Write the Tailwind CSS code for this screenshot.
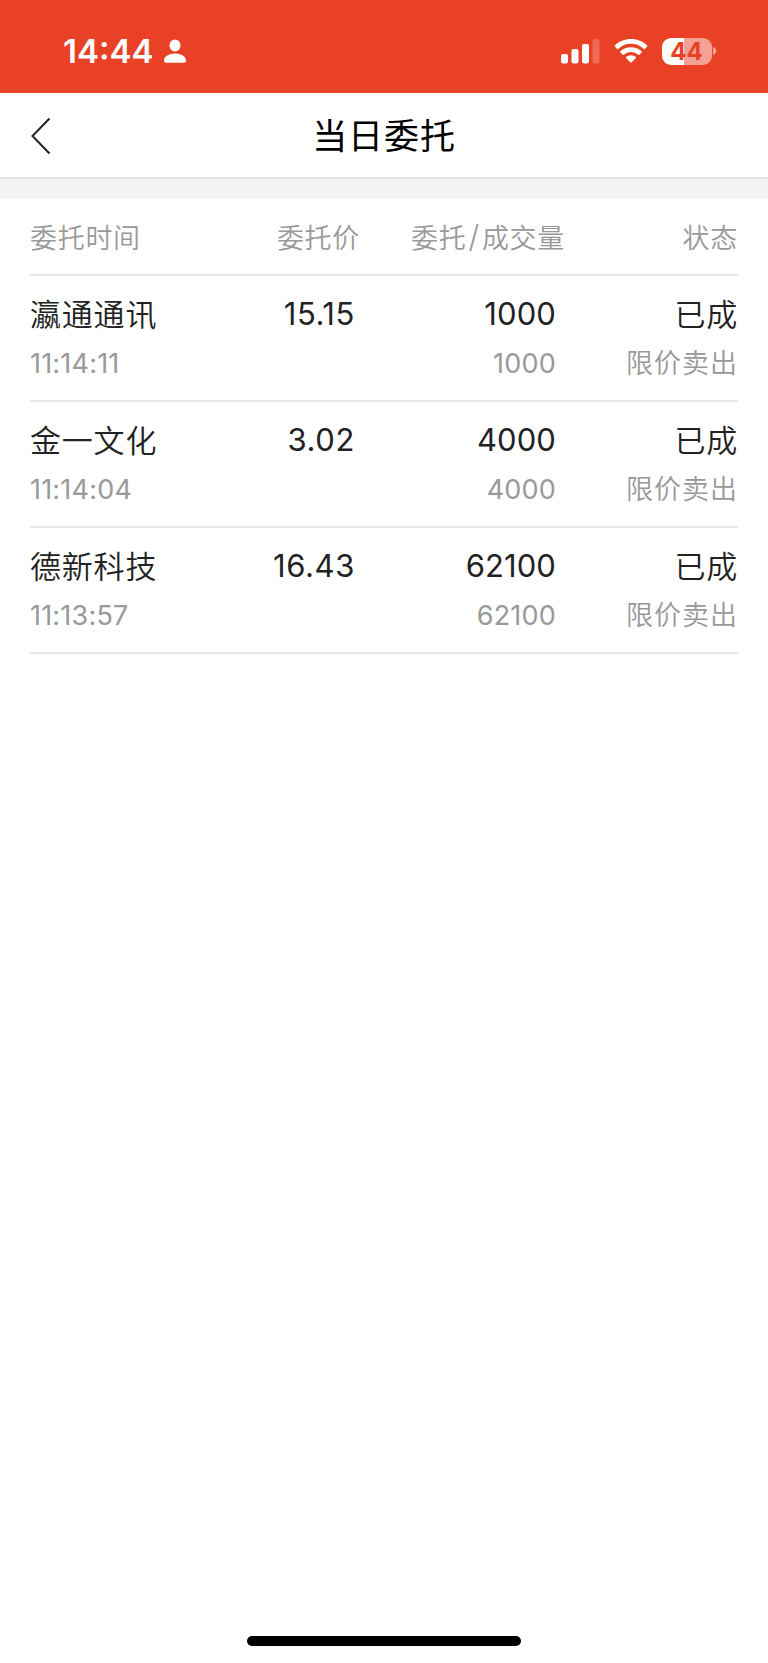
<!DOCTYPE html>
<html lang="zh-CN">
<head>
  <meta charset="UTF-8">
  <meta name="viewport" content="width=device-width, initial-scale=1.0">
  <title>当日委托</title>
  <script src="https://cdn.jsdelivr.net/npm/@tailwindcss/browser@4"></script>
</head>
<body class="bg-white font-['Inter','Noto_Sans_CJK_SC',sans-serif] text-[#222222]">

  <div class="flex flex-col h-[1663px] overflow-hidden">
    <!-- Status bar -->
    <div class="flex items-center h-[93px] bg-[#e94125] text-white pt-[9px] pl-[63px] pr-[51px]">
      <span class="text-[33px] leading-10 font-semibold">14:44</span>
      <svg class="ml-[10px]" width="24" height="26" viewBox="0 0 24 26" fill="currentColor">
        <ellipse cx="12" cy="7.500" rx="5.500" ry="6" />
        <path d="M1 22.500C1 18.500 6 15.500 12 15.500s11 3 11 7c0 1.500-.8 2.200-2.200 2.200H3.200C1.800 24.700 1 24 1 22.500z" />
      </svg>
      <svg class="ml-auto" width="40" height="26" viewBox="0 0 40 26" fill="currentColor">
        <rect x="1" y="16" width="7" height="9.500" rx="2" />
        <rect x="11.500" y="11" width="7" height="14.500" rx="2" />
        <rect x="22" y="6" width="7" height="19.500" rx="2" />
        <rect x="32.500" y="1" width="7" height="24.500" rx="2" opacity=".22" />
      </svg>
      <svg class="ml-[14px]" width="34" height="26" viewBox="0 0 34 26" fill="currentColor">
        <path d="M17 1C10.700 1 5 3.400.8 7.400c-.3.300-.3.800 0 1.100l2.400 2.400c.3.300.7.300 1 0C7.600 7.700 12 5.800 17 5.800s9.400 1.900 12.800 5.100c.3.300.7.300 1 0l2.400-2.400c.3-.3.300-.8 0-1.100C29 3.400 23.300 1 17 1z" />
        <path d="M17 9.200c-4.100 0-7.800 1.500-10.600 4.100-.3.300-.3.800 0 1.100l2.400 2.400c.3.300.7.300 1 0 1.900-1.700 4.400-2.800 7.200-2.800s5.300 1.100 7.200 2.800c.3.300.7.300 1 0l2.400-2.400c.3-.3.300-.8 0-1.100C24.800 10.700 21.100 9.200 17 9.200z" />
        <path d="M17 17.300c-1.900 0-3.600.7-4.900 1.800-.3.300-.3.700 0 1l4.400 4.400c.3.300.7.300 1 0l4.400-4.400c.3-.3.300-.7 0-1-1.300-1.100-3-1.800-4.900-1.800z" />
      </svg>
      <div class="flex items-center ml-[14px]">
        <div class="flex items-center justify-center w-[50px] h-[27px] rounded-[9px] bg-linear-to-r from-white from-44% to-[#f5a195] to-44% pt-px pr-px text-[#e94125] text-[24px] leading-none font-bold">44</div>
        <svg class="ml-[1px]" width="4" height="10" viewBox="0 0 4 10" fill="#f5a195">
          <path d="M0 1c2 .6 3.300 2 3.300 4S2 8.400 0 9z" />
        </svg>
      </div>
    </div>

    <!-- Navigation -->
    <div class="grid grid-cols-[1fr_auto_1fr] items-center h-[86px] px-[30px] border-b-2 border-[#e2e2e2]">
      <svg class="mt-[2px]" width="22" height="38" viewBox="0 0 22 38" fill="none" stroke="#222" stroke-width="2">
        <path d="M19.500 1.500 2.500 19l17 17.500" />
      </svg>
      <h1 class="pt-[2px] text-[35px] leading-[52px] tracking-[0.900px] text-black">当日委托</h1>
    </div>
    <div class="h-5 bg-[#f4f4f4]"></div>

    <!-- Orders -->
    <div class="mx-[30px]">
      <div class="grid grid-cols-[180px_150px_205px_1fr] items-center h-[77px] pt-[5px] border-b-2 border-[#e7e6ec] text-[27px] tracking-[0.700px] font-[350] text-[#999999]">
        <div>委托时间</div>
        <div class="text-right">委托价</div>
        <div class="text-right">委托<span class="inline-block px-[2px] text-[31px] leading-none">/</span>成交量</div>
        <div class="text-right">状态</div>
      </div>
      <div id="orderList"></div>
    </div>

    <!-- Home indicator -->
    <div class="mt-auto mb-[17px] mx-auto w-[274px] h-[10px] rounded-full bg-black"></div>
  </div>

  <script>
    const orders = [
      { name: "瀛通通讯", time: "11:14:11", price: "15.15", amount: 1000, filled: 1000, status: "已成", type: "限价卖出" },
      { name: "金一文化", time: "11:14:04", price: "3.02", amount: 4000, filled: 4000, status: "已成", type: "限价卖出" },
      { name: "德新科技", time: "11:13:57", price: "16.43", amount: 62100, filled: 62100, status: "已成", type: "限价卖出" },
    ];

    // Render one block of two lines per order
    document.getElementById("orderList").innerHTML = orders
      .map(order => `
        <div class="grid grid-cols-[180px_145px_201px_1fr] grid-rows-[48px_50px] h-[126px] pt-[15px] border-b-2 border-[#e7e6ec] items-center">
          <div class="text-[31px] tracking-[0.800px] font-[350]">${order.name}</div>
          <div class="-mt-[2px] text-right text-[31px] tracking-[0.600px]">${order.price}</div>
          <div class="-mt-[2px] text-right text-[31px] tracking-[0.100px]">${order.amount}</div>
          <div class="text-right text-[31px] tracking-[0.800px] font-[350]">${order.status}</div>
          <div class="col-span-2 text-[27px] tracking-[0.200px] text-[#999999]">${order.time}</div>
          <div class="text-right text-[27px] tracking-[0.200px] text-[#999999]">${order.filled}</div>
          <div class="text-right text-[27px] tracking-[1px] font-[350] text-[#999999]">${order.type}</div>
        </div>
      `)
      .join("");
  </script>
</body>
</html>
